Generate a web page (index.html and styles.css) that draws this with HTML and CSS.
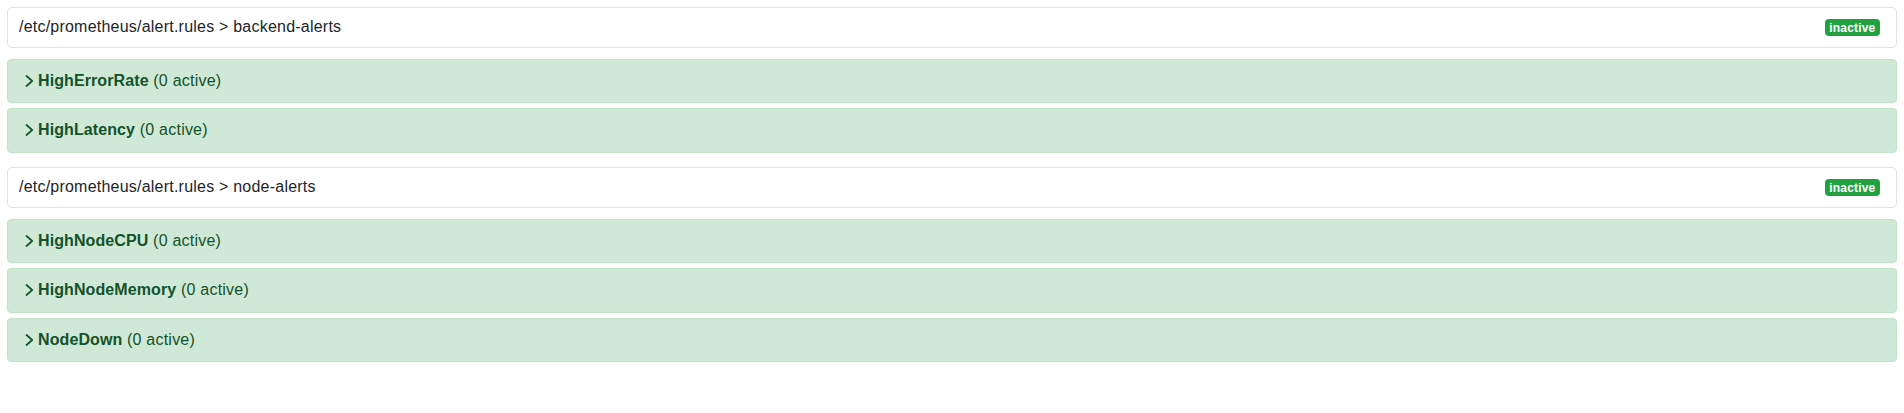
FILE: index.html
```html
<!DOCTYPE html>
<html>
<head>
<meta charset="utf-8">
<link rel="stylesheet" href="styles.css">
</head>
<body>
<div class="page">
  <section class="group">
    <div class="group-header">
      <span class="group-title">/etc/prometheus/alert.rules &gt; backend-alerts</span>
      <span class="badge">inactive</span>
    </div>
    <div class="rule">
      <svg class="chev" viewBox="0 0 9 12" width="9" height="12"><path d="M1.5 1 L7.2 6 L1.5 11" fill="none" stroke="currentColor" stroke-width="1.7" stroke-linecap="round" stroke-linejoin="round"/></svg>
      <span><b>HighErrorRate</b> (0 active)</span>
    </div>
    <div class="rule">
      <svg class="chev" viewBox="0 0 9 12" width="9" height="12"><path d="M1.5 1 L7.2 6 L1.5 11" fill="none" stroke="currentColor" stroke-width="1.7" stroke-linecap="round" stroke-linejoin="round"/></svg>
      <span><b>HighLatency</b> (0 active)</span>
    </div>
  </section>
  <section class="group">
    <div class="group-header">
      <span class="group-title">/etc/prometheus/alert.rules &gt; node-alerts</span>
      <span class="badge">inactive</span>
    </div>
    <div class="rule">
      <svg class="chev" viewBox="0 0 9 12" width="9" height="12"><path d="M1.5 1 L7.2 6 L1.5 11" fill="none" stroke="currentColor" stroke-width="1.7" stroke-linecap="round" stroke-linejoin="round"/></svg>
      <span><b>HighNodeCPU</b> (0 active)</span>
    </div>
    <div class="rule">
      <svg class="chev" viewBox="0 0 9 12" width="9" height="12"><path d="M1.5 1 L7.2 6 L1.5 11" fill="none" stroke="currentColor" stroke-width="1.7" stroke-linecap="round" stroke-linejoin="round"/></svg>
      <span><b>HighNodeMemory</b> (0 active)</span>
    </div>
    <div class="rule">
      <svg class="chev" viewBox="0 0 9 12" width="9" height="12"><path d="M1.5 1 L7.2 6 L1.5 11" fill="none" stroke="currentColor" stroke-width="1.7" stroke-linecap="round" stroke-linejoin="round"/></svg>
      <span><b>NodeDown</b> (0 active)</span>
    </div>
  </section>
</div>
</body>
</html>
```

FILE: styles.css
```css
* { box-sizing: border-box; }
html, body { margin: 0; padding: 0; background: #fff; }
body {
  font-family: "Liberation Sans", Arial, Helvetica, sans-serif;
  font-size: 16px;
  line-height: 24px;
  color: #212529;
  letter-spacing: 0.22px;
}
.page { padding: 7px; }
.group { display: flex; flex-direction: column; gap: 5px; margin-bottom: 14.5px; }
.group-header {
  display: flex;
  align-items: center;
  justify-content: space-between;
  flex: none;
  height: 40.5px;
  padding: 0 16px 0 11px;
  border: 1px solid #dfe2e6;
  border-radius: 5px;
  background: #fff;
  margin-bottom: 6px;
}
.badge {
  display: inline-block;
  background: #22a143;
  color: #fff;
  font-weight: 700;
  font-size: 12px;
  line-height: 12px;
  letter-spacing: 0.2px;
  padding: 3px 4.5px 2px;
  border-radius: 4px;
}
.rule {
  display: flex;
  align-items: center;
  flex: none;
  height: 44.5px;
  padding: 0 17px;
  background: #d0e8d6;
  border: 1px solid #c2e2ca;
  border-radius: 4px;
  color: #13522a;
}
.rule b { font-weight: 700; letter-spacing: 0.1px; }
.chev { flex: none; margin-right: 4px; }
```
